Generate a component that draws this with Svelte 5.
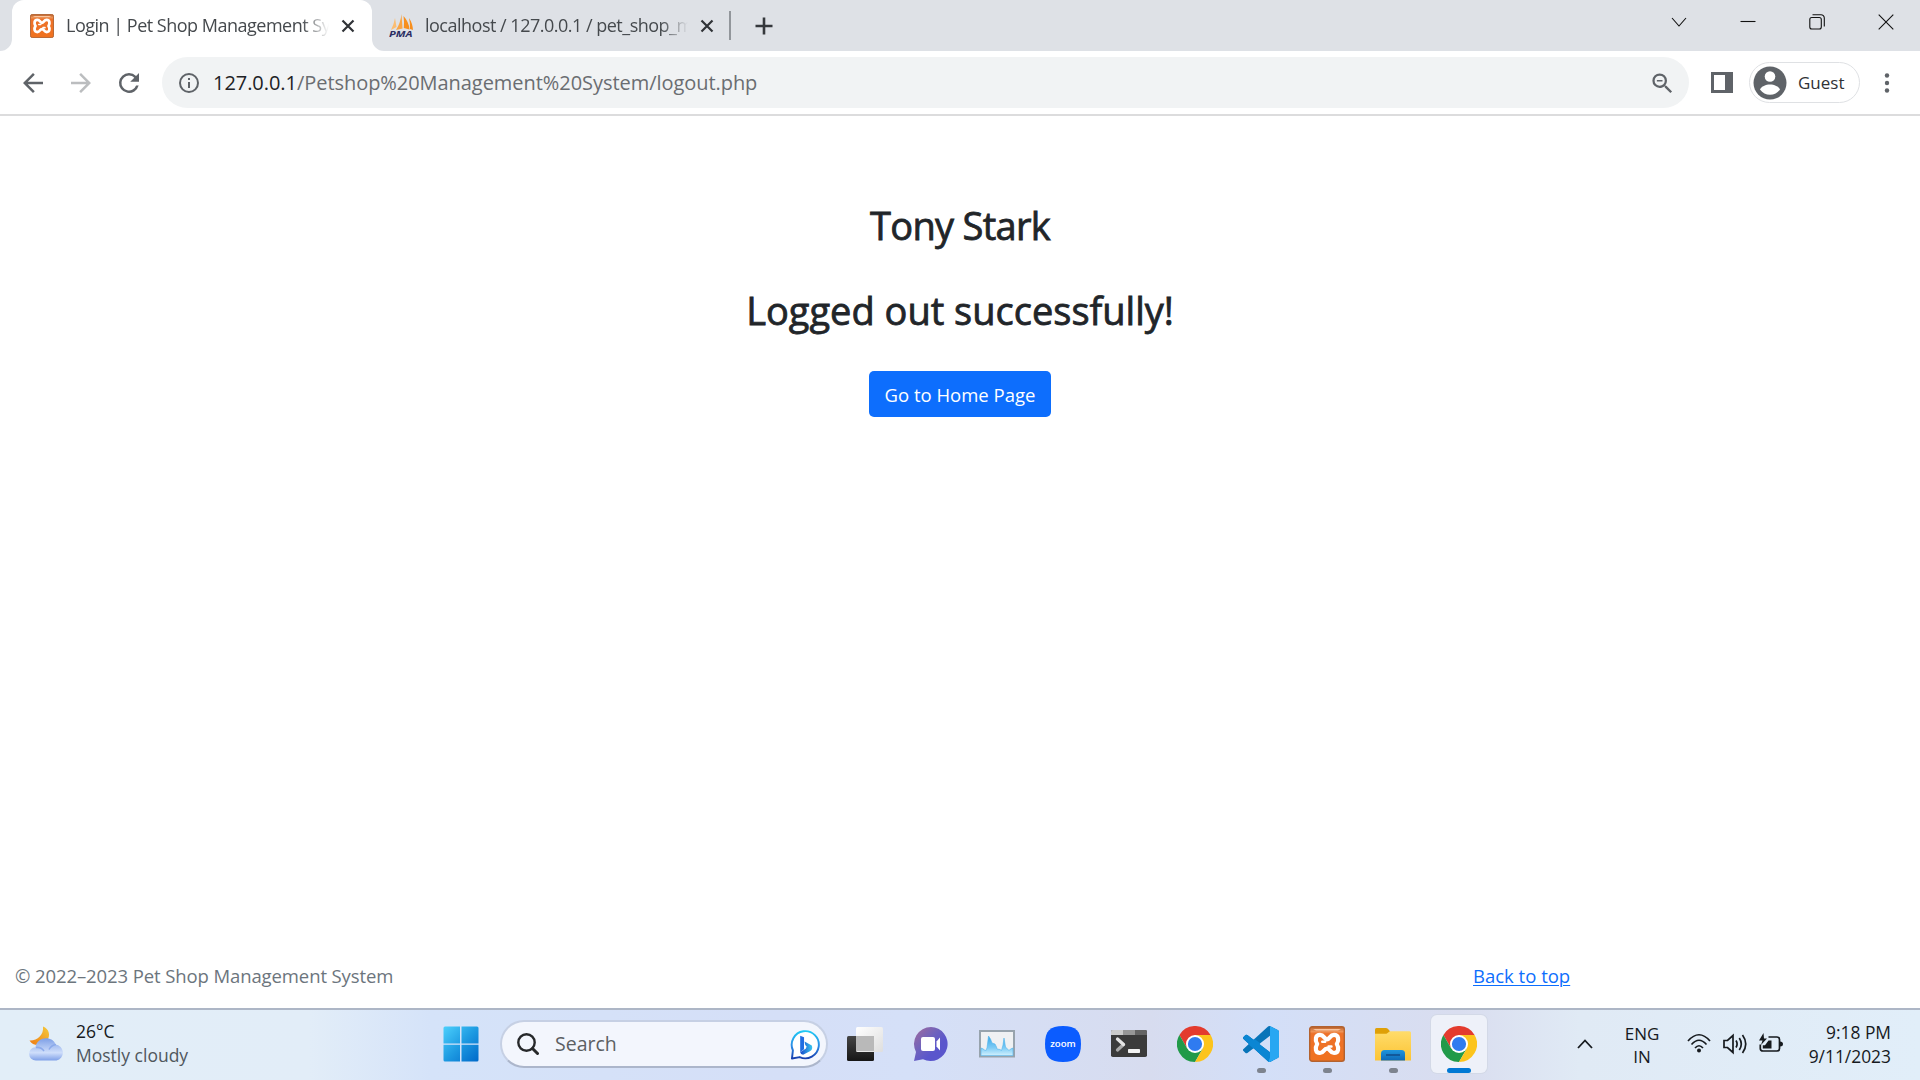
<script>
  const apps = [
    { id: 'taskview' },
    { id: 'chat' },
    { id: 'monitor' },
    { id: 'zoom' },
    { id: 'terminal' },
    { id: 'chrome' },
    { id: 'code', running: true },
    { id: 'xampp', running: true },
    { id: 'files', running: true },
    { id: 'chrome', active: true }
  ];
</script>

{#snippet xampp()}
  <svg class="fill" viewBox="0 0 36 36">
    <defs>
      <linearGradient id="xo" x1="0" y1="0" x2="0" y2="1">
        <stop offset="0" stop-color="#b9602a" />
        <stop offset=".14" stop-color="#ee9458" />
        <stop offset=".2" stop-color="#ee722a" />
        <stop offset="1" stop-color="#f0721f" />
      </linearGradient>
    </defs>
    <rect x=".7" y=".7" width="34.6" height="34.6" rx="2.5" fill="url(#xo)" stroke="#b3622f" stroke-width="1.4" />
    <path d="M4 3h28l-3 1.5H7z" fill="#f9c6a0" />
    <path d="M18 13.400C15.600 13.400 15 8.900 11 8.900C6.400 8.900 5.700 14 8.200 18C5.700 22 6.400 27 11 27C15 27 14.500 22.600 18 22.600C21.500 22.600 21 27 25 27C29.600 27 30.300 22 27.800 18C30.300 14 29.600 8.900 25 8.900C21 8.900 20.400 13.400 18 13.400Z" fill="#ee7226" stroke="#fff" stroke-width="4.200" stroke-linejoin="round" />
    <path d="M13.200 15.800h3M19.500 20.500h3" stroke="#fff" stroke-width="2.400" stroke-linecap="round" />
  </svg>
{/snippet}

{#snippet chrome()}
  <svg class="fill" viewBox="0 0 36 36">
    <path d="M2.400 9A18 18 0 0 1 33.600 9H18L10.200 22.500Z" fill="#e33b2e" />
    <path d="M2.400 9A18 18 0 0 0 18 36L25.800 22.500H10.200Z" fill="#219a49" />
    <path d="M33.600 9A18 18 0 0 1 18 36L25.800 22.500L18 9Z" fill="#fcc41c" />
    <circle cx="18" cy="18" r="9" fill="#fff" />
    <circle cx="18" cy="18" r="7.100" fill="#2f7bf0" />
  </svg>
{/snippet}

{#snippet cross()}
  <svg class="cross" viewBox="0 0 12 12"><path d="M.5.500l11 11M11.500.500L.5 11.500" /></svg>
{/snippet}

<div class="screen">
  <header class="tabs">
    <div class="tab current">
      <span class="favicon">{@render xampp()}</span>
      <span class="title">Login | Pet Shop Management Sy</span>
      {@render cross()}
      <svg class="flare left" viewBox="0 0 12 12"><path d="M12 0v12H0A12 12 0 0 0 12 0" fill="#fff" /></svg>
      <svg class="flare right" viewBox="0 0 12 12"><path d="M0 0v12h12A12 12 0 0 1 0 0" fill="#fff" /></svg>
    </div>
    <div class="tab other">
      <svg class="favicon" viewBox="0 0 24 24">
        <path d="M6 4L7.500 13L2 16Q5 10 6 4" fill="#fbbd72" />
        <path d="M12.500 0L13.500 14.500L7 16Q11.500 9 12.500 0" fill="#f9a546" />
        <path d="M14.500 2Q20 8 20.500 15.500L14.800 14Q15.500 8 14.500 2M20 4Q23.500 9 24 16L21 15Q21.300 9 20 4" fill="#f78f1e" />
        <text x="0" y="23" textLength="23.500" lengthAdjust="spacingAndGlyphs">PMA</text>
      </svg>
      <span class="title">localhost / 127.0.0.1 / pet_shop_m</span>
      {@render cross()}
    </div>
    <span class="divider"></span>
    <svg class="plus" viewBox="0 0 18 18"><path d="M9 .5v17M.5 9h17" /></svg>
    <div class="window">
      <svg viewBox="0 0 16 16"><path d="M1 4l7 8 7-8" /></svg>
      <svg viewBox="0 0 16 16"><path d="M.5 7.500h15" /></svg>
      <svg viewBox="0 0 16 16"><rect x=".8" y="3.500" width="11.500" height="11.500" rx="2" /><path d="M3.500.7H12a3.300 3.300 0 0 1 3.300 3.300v8.500" /></svg>
      <svg viewBox="0 0 16 16"><path d="M.7.700l14.600 14.600M15.300.700L.7 15.300" /></svg>
    </div>
  </header>

  <nav class="toolbar">
    <svg class="nav" viewBox="0 0 24 24"><path d="M20 11H7.830l5.590-5.590L12 4l-8 8 8 8 1.410-1.410L7.830 13H20v-2z" /></svg>
    <svg class="nav dim" viewBox="0 0 24 24"><path d="M12 4l-1.410 1.410L16.170 11H4v2h12.170l-5.580 5.590L12 20l8-8z" /></svg>
    <svg class="nav" viewBox="0 0 24 24"><path d="M17.650 6.350A7.958 7.958 0 0 0 12 4a8 8 0 1 0 7.730 10h-2.080A6 6 0 1 1 12 6c1.660 0 3.140.690 4.220 1.780L13 11h7V4l-2.350 2.350z" /></svg>
    <div class="omnibox">
      <svg class="info" viewBox="0 0 24 24"><path d="M11 7h2v2h-2zm0 4h2v6h-2zm1-9a10 10 0 1 0 0 20 10 10 0 0 0 0-20zm0 18a8 8 0 1 1 0-16 8 8 0 0 1 0 16z" /></svg>
      <span class="url"><b>127.0.0.1</b>/Petshop%20Management%20System/logout.php</span>
      <svg class="zoomout" viewBox="0 0 24 24"><path d="M15.500 14h-.790l-.280-.270A6.471 6.471 0 0 0 16 9.500 6.500 6.500 0 1 0 9.500 16c1.610 0 3.090-.590 4.230-1.570l.270.280v.790l5 4.990L20.490 19l-4.990-5zm-6 0a4.500 4.500 0 1 1 0-9 4.500 4.500 0 0 1 0 9zM7 8.800h5v1.400H7z" /></svg>
    </div>
    <span class="panel"></span>
    <div class="profile">
      <svg viewBox="0 0 34 34">
        <circle cx="17" cy="17" r="16.500" fill="#5f6368" />
        <circle cx="17" cy="10.500" r="5.300" fill="#fff" />
        <path d="M7 23.500C8 20.500 13 18.500 17 18.500S26 20.500 27 23.500C24.500 27 21 28.800 17 28.800S9.500 27 7 23.500" fill="#fff" />
      </svg>
      <span>Guest</span>
    </div>
    <svg class="dots" viewBox="0 0 6 20"><circle cx="3" cy="2.500" r="2.200" /><circle cx="3" cy="10" r="2.200" /><circle cx="3" cy="17.500" r="2.200" /></svg>
  </nav>

  <main>
    <h2 class="name">Tony Stark</h2>
    <h2 class="message">Logged out successfully!</h2>
    <button>Go to Home Page</button>
    <footer>
      <span>© 2022–2023 Pet Shop Management System</span>
      <a href="#top">Back to top</a>
    </footer>
  </main>

  <div class="taskbar">
    <div class="weather">
      <svg viewBox="0 0 36 36">
        <defs>
          <linearGradient id="moon" x1="0" y1="1" x2="1" y2="0"><stop offset="0" stop-color="#ee7a14" /><stop offset="1" stop-color="#f4cb3c" /></linearGradient>
          <linearGradient id="cloud" x1="0" y1="0" x2="0" y2="1"><stop offset="0" stop-color="#7d9fe6" /><stop offset=".65" stop-color="#cfdefb" /><stop offset="1" stop-color="#7fa0e8" /></linearGradient>
        </defs>
        <path d="M14 .5C20 3 22 9 18 15C14 20 4 21 .5 14.500C8 15 15 9 14 .500" fill="url(#moon)" />
        <path d="M7 34.500a6.600 6.600 0 0 1-.5-13.300C8 10 24 9.500 26.500 18.500a8.100 8.100 0 0 1 1 16z" fill="url(#cloud)" />
        <path d="M7 21.500q5-.8 8 3.500M20 23.500q2.500-4.500 7-5" fill="none" stroke="#8caaea" stroke-width="1.500" />
      </svg>
      <div class="report"><p class="temp">26°C</p><p class="sky">Mostly cloudy</p></div>
    </div>

    <svg class="start" viewBox="0 0 36 36">
      <defs><linearGradient id="win" x1="0" y1="0" x2="1" y2="1"><stop offset="0" stop-color="#4cd0fc" /><stop offset=".5" stop-color="#1e9be2" /><stop offset="1" stop-color="#0069c9" /></linearGradient></defs>
      <path d="M2 .5h15v17H.5V2Q.5.500 2 .500M18.500.500H34Q35.500.500 35.500 2v15.500h-17zM.5 18.800H17v16.700H2Q.5 35.500.5 34zM18.500 18.800h17V34q0 1.500-1.500 1.500H18.500z" fill="url(#win)" />
    </svg>

    <div class="search">
      <svg class="lens" viewBox="0 0 22 22"><circle cx="9.500" cy="9.500" r="8.200" /><path d="M15.500 15.500l5 5" stroke-width="3" /></svg>
      <span>Search</span>
      <svg class="bing" viewBox="0 0 32 32">
        <defs>
          <linearGradient id="b1" x1="0" y1="0" x2="0" y2="1"><stop offset="0" stop-color="#1fc8f4" /><stop offset=".55" stop-color="#2b8be6" /><stop offset="1" stop-color="#173fae" /></linearGradient>
          <linearGradient id="b2" x1="0" y1="0" x2="1" y2="0"><stop offset="0" stop-color="#1746ca" /><stop offset="1" stop-color="#38c6ef" /></linearGradient>
        </defs>
        <path d="M2 30.500L3 22A14 14 0 1 1 10 29Z" fill="#fff" stroke="url(#b1)" stroke-width="2" stroke-linejoin="round" />
        <path d="M10.500 7l4 1.500v12.500l-4 3z" fill="#206de2" />
        <path d="M10.500 24l6-4-1.500-7 7.500 4q1.500 4-2 6l-7 3.500q-2.500 0-3-2.500" fill="url(#b2)" />
        <path d="M14.500 15.500v5l3-2z" fill="#fff" />
      </svg>
    </div>

    <div class="apps">
      {#each apps as app}
        <div class="app" class:active={app.active} class:running={app.running}>
          <div class="icon">
            {#if app.id === 'taskview'}
              <svg class="fill" viewBox="0 0 36 36">
                <defs>
                  <linearGradient id="tv" x1="0" y1="0" x2="1" y2="1"><stop offset="0" stop-color="#fff" /><stop offset="1" stop-color="#dedede" /></linearGradient>
                  <linearGradient id="td" x1="0" y1="0" x2="0" y2="1"><stop offset="0" stop-color="#454545" /><stop offset="1" stop-color="#161616" /></linearGradient>
                </defs>
                <rect x="0" y="10" width="27" height="25" rx="1.500" fill="url(#td)" />
                <rect x="9" y="1" width="27" height="25" rx="1.500" fill="url(#tv)" />
                <path d="M9 10h18v15H9z" fill="#b9b9b9" />
              </svg>
            {:else if app.id === 'chat'}
              <svg class="fill" viewBox="0 0 36 36">
                <defs><linearGradient id="ch" x1=".1" y1=".2" x2=".6" y2=".7"><stop offset="0" stop-color="#9068a8" /><stop offset=".5" stop-color="#6f63bd" /><stop offset="1" stop-color="#5a56cc" /></linearGradient></defs>
                <path d="M18 1a17 17 0 1 1-8 32.200L1 35l2-9A17 17 0 0 1 18 1" fill="url(#ch)" />
                <rect x="8" y="11" width="14" height="14" rx="2" fill="#fff" />
                <path d="M23.500 15.500l3.500-4v13l-3.500-4z" fill="#fff" />
              </svg>
            {:else if app.id === 'monitor'}
              <svg class="fill" viewBox="0 0 36 36">
                <defs><linearGradient id="mo" x1="0" y1="0" x2="0" y2="1"><stop offset="0" stop-color="#35a6e8" /><stop offset=".6" stop-color="#7ccbf5" /><stop offset="1" stop-color="#d0f0fd" /></linearGradient></defs>
                <rect x="1" y="5" width="34" height="25.500" fill="#eff1f3" stroke="#97a3ad" stroke-width="2" />
                <path d="M2 29.500V22l2.500 1 2 2 1.500-3L9.500 10l2 3 1.500 4 3 1 1.500 3 .5 2 3 .5 1.500 1L24 19l1-7 1.500 9 1.500 1.500 2 2 1.500-1.500 2.500-1v7.500z" fill="url(#mo)" stroke="#4fb4ec" stroke-width=".6" />
              </svg>
            {:else if app.id === 'zoom'}
              <svg class="fill" viewBox="0 0 36 36">
                <path d="M18 0C31 0 36 5 36 18S31 36 18 36 0 31 0 18 5 0 18 0" fill="#0b5cff" />
                <text class="zoomword" x="5.200" y="21" textLength="25.600" lengthAdjust="spacingAndGlyphs">zoom</text>
              </svg>
            {:else if app.id === 'terminal'}
              <svg class="fill" viewBox="0 0 36 36">
                <rect x="0" y="4" width="36" height="27" rx="1.800" fill="#3b3b3b" />
                <path d="M1.500 4H12v5H0V5.500Q0 4 1.500 4" fill="#cbcbcb" /><path d="M12 4h12v5H12z" fill="#979797" /><path d="M24 4h10.500Q36 4 36 5.500V9H24z" fill="#646464" />
                <path d="M12.500 18.500l-6 5.500" stroke="#aaa" stroke-width="3.300" stroke-linecap="round" /><path d="M6.500 13l6 5.500" stroke="#e4e4e4" stroke-width="3.300" stroke-linecap="round" />
                <rect x="17" y="23" width="12" height="4" rx=".7" fill="#f2f2f2" />
              </svg>
            {:else if app.id === 'chrome'}
              {@render chrome()}
            {:else if app.id === 'code'}
              <svg class="fill" viewBox="0 0 24 24">
                <clipPath id="vs"><path d="M23.150 2.587L18.210.210a1.494 1.494 0 0 0-1.705.290l-9.460 8.630-4.120-3.128a.999.999 0 0 0-1.276.057L.327 7.261A1 1 0 0 0 .326 8.740L3.899 12 .326 15.260a1 1 0 0 0 .001 1.479L1.650 17.940a.999.999 0 0 0 1.276.057l4.120-3.128 9.460 8.630a1.492 1.492 0 0 0 1.704.290l4.942-2.377A1.500 1.500 0 0 0 24 20.060V3.939a1.500 1.500 0 0 0-.850-1.352zm-5.146 14.861L10.826 12l7.178-5.448v10.896z" /></clipPath>
                <g clip-path="url(#vs)">
                  <path d="M0 0h24v24H0z" fill="#0874b8" />
                  <path d="M0 5l3 0L20 18v6h-3L0 9z" fill="#0b86d3" />
                  <path d="M18 0h6v24h-7l1-3z" fill="#27a7f2" />
                </g>
              </svg>
            {:else if app.id === 'xampp'}
              {@render xampp()}
            {:else}
              <svg class="fill" viewBox="0 0 36 36">
                <defs><linearGradient id="fo" x1="0" y1="0" x2="0" y2="1"><stop offset="0" stop-color="#ffdc6b" /><stop offset="1" stop-color="#fcc434" /></linearGradient><linearGradient id="fb" x1="0" y1="0" x2="0" y2="1"><stop offset="0" stop-color="#1f95dd" /><stop offset="1" stop-color="#0e69b7" /></linearGradient></defs>
                <path d="M0 3.500Q0 2 1.500 2H11q1.500 0 3 2l1 1.500L12 9H0z" fill="#dfa007" />
                <path d="M0 7.800h11.500L15 5.200h19.500Q36 5.200 36 6.700V34.500H0z" fill="url(#fo)" />
                <path d="M6 34.500V27.500q0-3.500 3.500-3.500h17q3.500 0 3.500 3.500v7z" fill="url(#fb)" />
                <path d="M11 29h14" stroke="#124f8d" stroke-width="1.600" />
              </svg>
            {/if}
          </div>
        </div>
      {/each}
    </div>

    <div class="tray">
      <svg class="up" viewBox="0 0 16 10"><path d="M1 9l7-7.500L15 9" /></svg>
      <div class="lang"><p>ENG</p><p>IN</p></div>
      <svg class="status" viewBox="0 0 24 22"><path d="M1 8Q12-4.500 23 8M4.500 11.500Q12 3 19.500 11.500M8 15Q12 10.500 16 15" /><circle cx="12" cy="17.500" r="2" fill="#161a1e" stroke="none" /></svg>
      <svg class="status" viewBox="0 0 24 22"><path d="M1 7.500h3.500L10 2.500v17l-5.500-5H1zM13 7.500q2.200 3.500 0 7M16.300 5q4 6 0 12M19.500 2q6.500 9 0 18" /></svg>
      <svg class="status" viewBox="0 0 24 22"><path d="M9.500 4H18q2.500 0 2.500 2.500v9q0 2.500-2.500 2.500H4Q1.300 18 1.300 15.500v-4" /><path d="M21 8.500q3 0 3 2.500t-3 2.500zM3.800 15.600v-3.400H6L9.500 7.500H12.500v8.100zM4.500 0L0 7.500h3.500L2 12l6-6.500H5z" fill="#161a1e" stroke="none" /></svg>
      <div class="clock"><p>9:18 PM</p><p>9/11/2023</p></div>
    </div>
  </div>
</div>

<style>
  :global(body) { margin: 0; overflow: hidden; }
  p, h2 { margin: 0; }
  svg { display: block; flex: none; }
  .screen {
    width: 1920px; height: 1080px; display: flex; flex-direction: column; background: #fff;
    font-family: "Open Sans", "Noto Sans", sans-serif; color: #212529; white-space: nowrap;
  }
  .fill { width: 100%; height: 100%; }

  .tabs { height: 51px; background: #dee1e6; display: flex; align-items: stretch; flex: none; box-sizing: border-box; padding-left: 12px; }
  .tab { display: flex; align-items: center; box-sizing: border-box; position: relative; }
  .current { width: 360px; background: #fff; border-radius: 12px 12px 0 0; padding-left: 18px; }
  .other { width: 357px; padding-left: 17px; }
  .favicon { width: 24px; height: 24px; flex: none; }
  .favicon text { font: italic 700 8.500px "Open Sans", sans-serif; fill: #2b2d63; }
  .title { margin-left: 12px; width: 264px; flex: none; font-size: 18px; line-height: 30px; padding-bottom: 2px; color: #45494d; letter-spacing: -.5px; mask-image: linear-gradient(90deg, #000 236px, transparent 263px); }
  .cross { width: 12px; height: 12px; margin-left: 12px; stroke: #303337; stroke-width: 2.200; overflow: visible; }
  .flare { position: absolute; bottom: 0; width: 12px; height: 12px; }
  .left { left: -12px; }
  .right { right: -12px; }
  .divider { width: 2px; height: 29px; background: #92969b; align-self: center; }
  .plus { width: 18px; height: 18px; stroke: #35383c; stroke-width: 2.600; align-self: center; margin-left: 24px; }
  .window { margin-left: auto; margin-right: 26px; display: flex; gap: 53px; padding-top: 14px; }
  .window svg { width: 16px; height: 16px; fill: none; stroke: #111; stroke-width: 1.100; }

  .toolbar { height: 65px; flex: none; box-sizing: border-box; border-bottom: 2px solid #dcdcdd; display: flex; align-items: center; padding-left: 18px; }
  .nav { width: 30px; height: 30px; fill: #5f6368; margin-right: 18px; }
  .dim { fill: #bbbdbf; }
  .omnibox { width: 1527px; height: 51px; border-radius: 26px; background: #f1f3f4; display: flex; align-items: center; box-sizing: border-box; padding: 0 13px 0 15px; }
  .info { width: 24px; height: 24px; fill: #5f6368; }
  .url { margin-left: 12px; font-size: 20px; line-height: 30px; color: #6a6d71; letter-spacing: -.05px; }
  .url b { font-weight: 400; color: #202124; }
  .zoomout { width: 27px; height: 27px; margin-left: auto; margin-top: 2px; fill: #5f6368; }
  .panel { width: 22px; height: 21px; margin-left: 22px; box-sizing: border-box; border: solid #5f6368; border-width: 3px 8px 3px 3px; }
  .profile { margin-left: 16px; width: 111px; height: 41px; box-sizing: border-box; border: 1.500px solid #dfe1e4; border-radius: 21px; display: flex; align-items: center; padding-left: 3px; font-size: 17px; color: #303236; }
  .profile svg { width: 34px; height: 34px; }
  .profile span { margin-left: 11px; line-height: 26px; }
  .dots { width: 6px; height: 20px; margin-left: 24px; fill: #5f6368; }

  main { height: 892px; flex: none; display: flex; flex-direction: column; align-items: center; }
  h2 { font-size: 38px; line-height: 48px; font-weight: 400; -webkit-text-stroke: .8px #212529; }
  .name { margin-top: 85px; letter-spacing: -.7px; }
  .message { margin-top: 37px; }
  button { margin-top: 37px; width: 182px; height: 46px; border: 0; padding: 2px 0 0; border-radius: 5px; background: #0d6efd; color: #fff; font: 18.500px/30px "Open Sans", sans-serif; white-space: nowrap; }
  footer { margin-top: auto; margin-bottom: 17px; width: 100%; display: flex; font-size: 18.500px; line-height: 30px; }
  footer span { width: 1458px; padding-left: 15px; color: #6c757d; letter-spacing: -.1px; }
  footer a { color: #0d6efd; text-decoration: underline; text-underline-offset: 2px; text-decoration-thickness: 1px; }

  .taskbar {
    height: 72px; flex: none; box-sizing: border-box; border-top: 2px solid #adb6c6; padding-bottom: 2px; display: flex; align-items: center;
    background: linear-gradient(90deg, #e2eef8 0, #e2edf8 310px, #d5e3f9 430px, #d5dff7 780px, #d5e0f8 910px, #d7dcef 1150px, #d3dff8 1260px, #d9ddef 1460px, #e0eaf5 1580px, #e1eef9 1920px);
  }
  .weather { width: 443px; flex: none; padding-left: 29px; box-sizing: border-box; display: flex; align-items: center; gap: 11px; font-size: 17.500px; line-height: 24px; }
  .weather svg { width: 36px; height: 36px; }
  .report { padding-bottom: 2px; }
  .temp { color: #16191c; }
  .sky { color: #50575e; }
  .start { width: 36px; height: 36px; }
  .search { margin-left: 21px; width: 328px; flex: none; height: 48px; box-sizing: border-box; border: 2px solid #c6d0e4; border-bottom-color: #acb6cb; border-radius: 24px; background: #f3f6fd; display: flex; align-items: center; padding: 0 5px 0 15px; }
  .lens { width: 22px; height: 22px; fill: none; stroke: #26282a; stroke-width: 2.400; stroke-linecap: round; }
  .search span { margin-left: 16px; font-size: 19.500px; line-height: 30px; color: #5c5f63; }
  .bing { width: 31px; height: 31px; margin-left: auto; }
  .apps { display: flex; flex: none; gap: 10px; margin-left: 9px; }
  .app { width: 56px; height: 58px; display: flex; box-sizing: border-box; padding: 11px 10px; position: relative; border-radius: 6px; }
  .icon { width: 36px; height: 36px; }
  .active { background: #eef1f9; box-shadow: 0 0 0 1px #d3d9e7; }
  .app.active::after, .running::after { content: ""; position: absolute; bottom: 0; left: 23.500px; width: 9px; height: 5px; border-radius: 3px; background: #7d838e; }
  .app.active::after { left: 16px; width: 24px; background: #0078d4; }
  .zoomword { font: 600 9px "Open Sans", sans-serif; fill: #fff; }

  .tray { flex: 1; display: flex; align-items: center; color: #161a1e; font-size: 17px; line-height: 24px; padding-right: 29px; }
  .up { width: 16px; height: 10px; margin-left: 90px; fill: none; stroke: #161a1e; stroke-width: 1.800; }
  .lang { width: 36px; margin-left: 31px; text-align: center; line-height: 23px; padding-top: 2px; }
  .status { width: 24px; height: 22px; fill: none; stroke: #161a1e; stroke-width: 1.700; margin-right: 12px; }
  .lang + .status { margin-left: 27px; }
  .clock { margin-left: auto; text-align: right; font-size: 17.400px; }
</style>
